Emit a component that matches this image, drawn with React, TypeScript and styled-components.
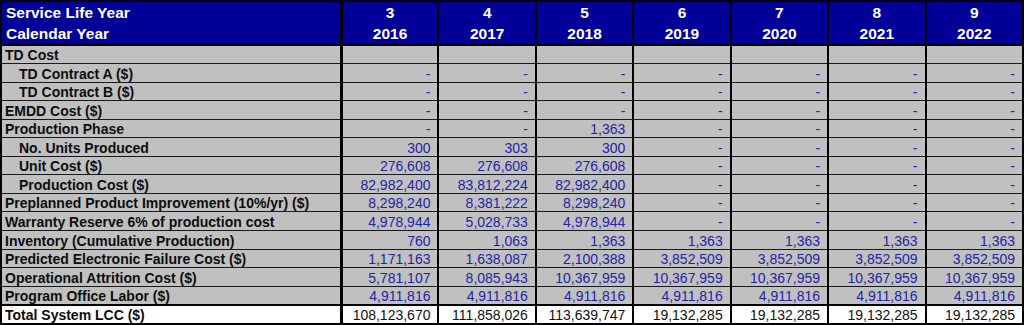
import React from 'react';
import styled, { createGlobalStyle, css } from 'styled-components';

const GlobalStyle = createGlobalStyle`
  html, body {
    margin: 0;
    padding: 0;
    background: #ffffff;
  }
`;

type Row = {
  label: string;
  indent?: boolean;
  values: string[];
};

const years = [
  { service: '3', calendar: '2016' },
  { service: '4', calendar: '2017' },
  { service: '5', calendar: '2018' },
  { service: '6', calendar: '2019' },
  { service: '7', calendar: '2020' },
  { service: '8', calendar: '2021' },
  { service: '9', calendar: '2022' },
];

const dash = ['-', '-', '-', '-', '-', '-', '-'];

const rows: Row[] = [
  { label: 'TD Cost', values: ['', '', '', '', '', '', ''] },
  { label: 'TD Contract A ($)', indent: true, values: dash },
  { label: 'TD Contract B ($)', indent: true, values: dash },
  { label: 'EMDD Cost ($)', values: dash },
  { label: 'Production Phase', values: ['-', '-', '1,363', '-', '-', '-', '-'] },
  { label: 'No. Units Produced', indent: true, values: ['300', '303', '300', '-', '-', '-', '-'] },
  { label: 'Unit Cost ($)', indent: true, values: ['276,608', '276,608', '276,608', '-', '-', '-', '-'] },
  {
    label: 'Production Cost ($)',
    indent: true,
    values: ['82,982,400', '83,812,224', '82,982,400', '-', '-', '-', '-'],
  },
  {
    label: 'Preplanned Product Improvement (10%/yr) ($)',
    values: ['8,298,240', '8,381,222', '8,298,240', '-', '-', '-', '-'],
  },
  {
    label: 'Warranty Reserve 6% of production cost',
    values: ['4,978,944', '5,028,733', '4,978,944', '-', '-', '-', '-'],
  },
  {
    label: 'Inventory (Cumulative Production)',
    values: ['760', '1,063', '1,363', '1,363', '1,363', '1,363', '1,363'],
  },
  {
    label: 'Predicted Electronic Failure Cost ($)',
    values: ['1,171,163', '1,638,087', '2,100,388', '3,852,509', '3,852,509', '3,852,509', '3,852,509'],
  },
  {
    label: 'Operational Attrition Cost ($)',
    values: ['5,781,107', '8,085,943', '10,367,959', '10,367,959', '10,367,959', '10,367,959', '10,367,959'],
  },
  {
    label: 'Program Office Labor ($)',
    values: ['4,911,816', '4,911,816', '4,911,816', '4,911,816', '4,911,816', '4,911,816', '4,911,816'],
  },
];

const totals = ['108,123,670', '111,858,026', '113,639,747', '19,132,285', '19,132,285', '19,132,285', '19,132,285'];

const Sheet = styled.table`
  width: 1024px;
  table-layout: fixed;
  border-collapse: collapse;
  border: 2px solid #000;
  font-family: 'Liberation Sans', Arial, sans-serif;
`;

const LabelCol = styled.col`
  width: 340px;
`;

const DataCol = styled.col`
  width: 97.4px;
`;

const HeadRow = styled.tr<{ $last?: boolean }>`
  height: 21px;
  background: #000099;
  color: #ffffff;

  ${({ $last }) =>
    $last &&
    css`
      border-bottom: 2px solid #000;
    `}
`;

const HeadCell = styled.th<{ $label?: boolean }>`
  padding: 0 4px;
  font-size: 15.5px;
  font-weight: bold;
  line-height: 21px;
  text-align: ${({ $label }) => ($label ? 'left' : 'center')};
  border-left: 2px solid #000;
  border-right: ${({ $label }) => ($label ? '3px' : '2px')} solid #000;
  white-space: nowrap;
`;

const BodyRow = styled.tr<{ $total?: boolean }>`
  height: 18.55px;
  background: #c0c0c0;

  ${({ $total }) =>
    $total &&
    css`
      height: 19.5px;
      background: #ffffff;
      border-top: 2px solid #000;
    `}
`;

const LabelCell = styled.td<{ $indent?: boolean }>`
  padding: 0 0 0 ${({ $indent }) => ($indent ? '17px' : '3px')};
  font-size: 14px;
  font-weight: bold;
  color: #0d0d0d;
  line-height: 16px;
  vertical-align: bottom;
  border-top: 1px solid #1a1a1a;
  border-bottom: 1px solid #1a1a1a;
  border-right: 3px solid #000;
  white-space: nowrap;
  overflow: hidden;
`;

const ValueCell = styled.td<{ $total?: boolean }>`
  padding: 0 7px 0 0;
  font-size: 14px;
  color: ${({ $total }) => ($total ? '#111111' : '#2424a6')};
  line-height: 16px;
  vertical-align: bottom;
  text-align: right;
  border-top: 1px solid #1a1a1a;
  border-bottom: 1px solid #1a1a1a;
  border-left: 2px solid #000;
  border-right: 2px solid #000;
  white-space: nowrap;
`;

const App: React.FC = () => (
  <>
    <GlobalStyle />
    <Sheet>
      <colgroup>
        <LabelCol />
        {years.map(({ calendar }) => (
          <DataCol key={calendar} />
        ))}
      </colgroup>
      <thead>
        <HeadRow>
          <HeadCell $label>Service Life Year</HeadCell>
          {years.map(({ service }) => (
            <HeadCell key={service}>{service}</HeadCell>
          ))}
        </HeadRow>
        <HeadRow $last>
          <HeadCell $label>Calendar Year</HeadCell>
          {years.map(({ calendar }) => (
            <HeadCell key={calendar}>{calendar}</HeadCell>
          ))}
        </HeadRow>
      </thead>
      <tbody>
        {rows.map(({ label, indent, values }) => (
          <BodyRow key={label}>
            <LabelCell $indent={indent}>{label}</LabelCell>
            {values.map((value, i) => (
              <ValueCell key={i}>{value}</ValueCell>
            ))}
          </BodyRow>
        ))}
        <BodyRow $total>
          <LabelCell>Total System LCC ($)</LabelCell>
          {totals.map((value, i) => (
            <ValueCell key={i} $total>
              {value}
            </ValueCell>
          ))}
        </BodyRow>
      </tbody>
    </Sheet>
  </>
);

export default App;
